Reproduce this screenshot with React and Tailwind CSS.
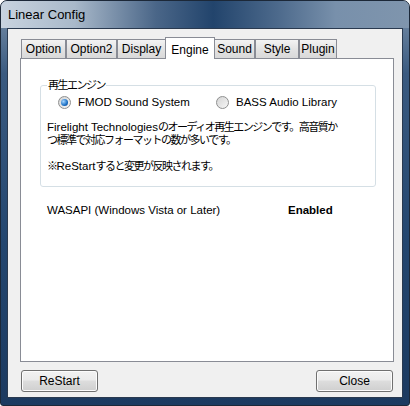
import React from 'react';

const TABS = ['Option', 'Option2', 'Display', 'Engine', 'Sound', 'Style', 'Plugin'];
const TAB_W = { Option: 45, Option2: 51, Display: 49, Engine: 50, Sound: 41, Style: 44, Plugin: 38 };

// MS UI Gothic kana are narrow; squeeze the CJK runs to match
const J = ({ children }) => <span className="text-[11px] tracking-[-1.5px]">{children}</span>;

function Radio({ checked, label }) {
  return (
    <label className="flex items-center gap-[7px]">
      <span className="w-[13px] h-[13px] rounded-full border border-[#8e8f8f] bg-[linear-gradient(135deg,#d4d4d4,#f7f7f7)] flex items-center justify-center">
        {checked && (
          <span className="w-[7px] h-[7px] rounded-full bg-[radial-gradient(circle_at_35%_35%,#a6d6ff,#1a6fc4_60%,#0d3f8a)]" />
        )}
      </span>
      <span>{label}</span>
    </label>
  );
}

function Button({ children }) {
  return (
    <button className="w-[77px] h-[22px] rounded-[3px] border border-[#707070] bg-[linear-gradient(to_bottom,#f2f2f2_0%,#ebebeb_45%,#dddddd_50%,#cfcfcf_100%)] text-[12px] text-black shadow-[inset_0_0_0_1px_#fcfcfc]">
      {children}
    </button>
  );
}

export default function App() {
  return (
    <div
      className="w-[410px] h-[406px] flex flex-col rounded-t-[7px] rounded-b-[3px] border border-[#1c2838] bg-[linear-gradient(to_bottom,#7d93ab_0%,#3a5a80_18%,#23466f_60%,#1c3a60_100%)] text-[11.5px] text-black overflow-hidden"
      style={{ fontFamily: '"Liberation Sans", "Noto Sans CJK JP", sans-serif' }}
    >
      {/* Title bar */}
      <div className="h-[27px] flex items-center px-[7px] bg-[linear-gradient(90deg,#c8d3df_0%,#a9b9ca_18%,#4a6688_38%,#22446c_52%,#4d6a8c_68%,#7890ab_82%,#7f95ad_100%)]">
        <span className="text-[13px] text-black">Linear Config</span>
      </div>

      {/* Client */}
      <div className="flex-1 mx-[6px] mb-[7px] border border-[#2a3a50] bg-[#f0f0f0] flex flex-col px-[12px] pt-[7px]">
        {/* Tab strip */}
        <div className="flex items-end h-[22px] pl-[1px] text-[12px]">
          {TABS.map((t) => {
            const sel = t === 'Engine';
            return (
              <div
                key={t}
                style={{ width: TAB_W[t] }}
                className={
                  sel
                    ? 'h-[22px] -mx-[1px] relative z-10 bg-white border border-b-0 border-[#898c95] flex items-start justify-center pt-[3px] -mb-[1px]'
                    : 'h-[19px] border border-b-0 border-[#898c95] bg-[linear-gradient(to_bottom,#f3f3f3,#e3e3e3_50%,#d9d9d9)] flex items-center justify-center'
                }
              >
                {t}
              </div>
            );
          })}
        </div>

        {/* Tab panel */}
        <div className="h-[304px] w-[374px] bg-white border border-[#898c95] pt-[18px] px-[19px]">
          <fieldset className="w-[336px] h-[110px] border border-[#d5dfe5] rounded-[3px] px-[6px]">
            <legend className="px-[1px]"><J>再生エンジン</J></legend>
            <div className="flex items-center h-[18px] -mt-[1px] pl-[11px]">
              <div className="w-[158px]"><Radio checked label="FMOD Sound System" /></div>
              <Radio label="BASS Audio Library" />
            </div>
            <p className="mt-[10px] leading-[13px] whitespace-nowrap">
              Firelight Technologies<J>のオーディオ再生エンジンです。高音質か</J><br />
              <J>つ標準で対応フォーマットの数が多いです。</J>
            </p>
            <p className="mt-[13px] leading-[13px] whitespace-nowrap">
              <J>※</J>ReStart<J>すると変更が反映されます。</J>
            </p>
          </fieldset>
          <div className="flex mt-[15px] pl-[7px]">
            <span className="w-[241px]">WASAPI (Windows Vista or Later)</span>
            <span className="font-bold">Enabled</span>
          </div>
        </div>

        {/* Buttons */}
        <div className="flex justify-between mt-[8px] pl-[1px] w-[373px]">
          <Button>ReStart</Button>
          <Button>Close</Button>
        </div>
      </div>
    </div>
  );
}
